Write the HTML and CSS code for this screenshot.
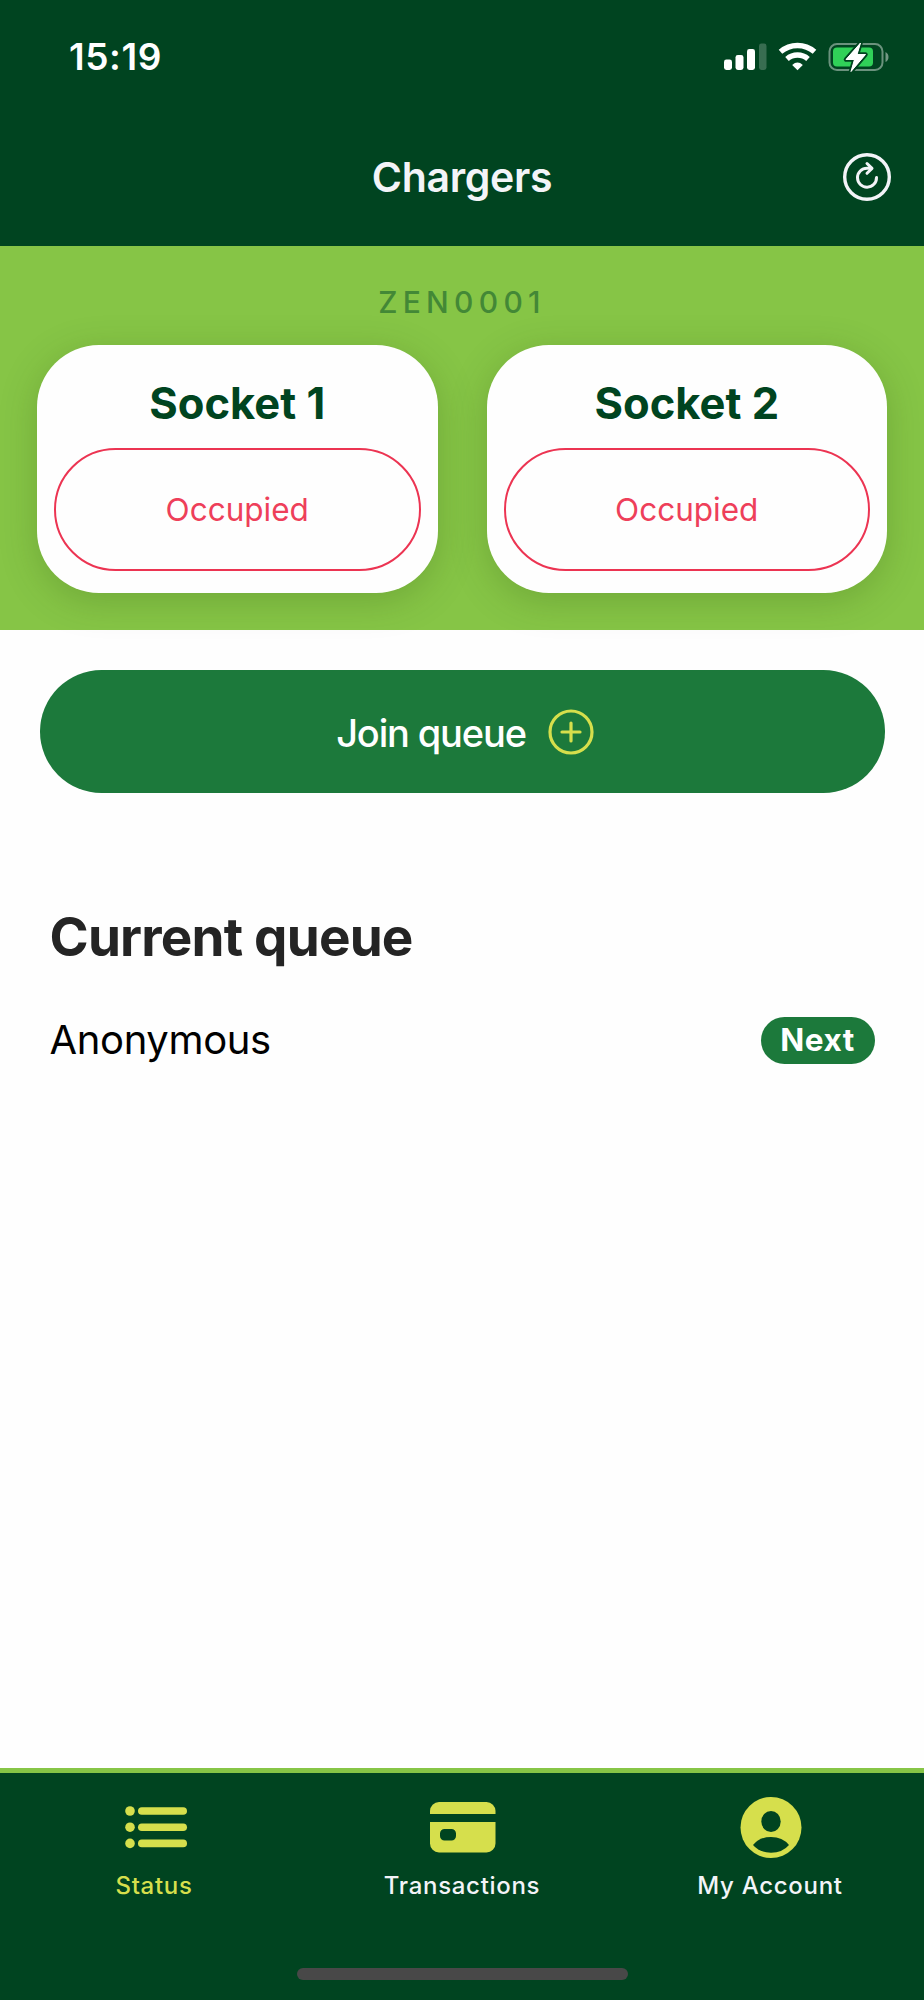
FILE: index.html
```html
<!DOCTYPE html>
<html lang="en">
<head>
    <meta charset="UTF-8">
    <meta name="viewport" content="width=device-width, initial-scale=1.0">
    <title>Chargers</title>
    <link rel="stylesheet" href="styles.css">
</head>
<body>

    <header class="header">
        <div class="status-bar">
            <span class="time">15:19</span>
            <svg class="status-icons" width="168" height="32" viewBox="0 0 168 32">
                <!-- signal -->
                <g fill="#fff">
                    <rect x="4" y="19.5" width="8" height="10.5" rx="2.4"/>
                    <rect x="15.5" y="15" width="8" height="15" rx="2.4"/>
                    <rect x="27" y="9" width="8" height="21" rx="2.4"/>
                    <rect x="39" y="3.5" width="7.5" height="26.5" rx="2.4" opacity="0.22"/>
                </g>
                <!-- wifi -->
                <g fill="none" stroke="#fff" stroke-width="5.4">
                    <path d="M60.5 11.8a26 26 0 0 1 34 0"/>
                    <path d="M67 19a16 16 0 0 1 21 0"/>
                </g>
                <path d="M77.5 30.3l-5.3-5.4q5.3-4.6 10.6 0z" fill="#fff"/>
                <!-- battery -->
                <rect x="109.5" y="4" width="53" height="26" rx="7.5" fill="none" stroke="#fff" stroke-opacity="0.42" stroke-width="2"/>
                <path d="M165.500 12q3 1.500 3 5t-3 5z" fill="#fff" opacity="0.45"/>
                <rect x="113" y="7.5" width="40" height="19" rx="4" fill="#30d158"/>
                <path d="M140.500 3l-14.500 16.500h8.500l-3.500 12 14.500-17h-8.500z" fill="#fff" stroke="#004420" stroke-width="4.5" stroke-linejoin="round" paint-order="stroke"/>
                <path d="M140.500 3l-14.500 16.500h8.500l-3.500 12 14.500-17h-8.500z" fill="#fff" stroke="#fff" stroke-width="1" stroke-linejoin="round"/>
            </svg>
        </div>
        <div class="title-bar">
            <h1 class="title">Chargers</h1>
            <svg class="refresh" width="50" height="50" viewBox="0 0 50 50" fill="none" stroke="#f3f4f8" stroke-linecap="round" stroke-linejoin="round">
                <circle cx="25" cy="25" r="22.3" stroke-width="3.4"/>
                <path d="M34.5 25.5a9.500 9.500 0 1 1-9.500-9.300h4" stroke-width="3"/>
                <path d="M25 11.500l5 4.900-5 4.900" stroke-width="3"/>
            </svg>
        </div>
    </header>

    <section class="charger">
        <p class="charger-id">ZEN0001</p>
        <div class="sockets">
            <div class="socket">
                <h2 class="socket-name">Socket 1</h2>
                <div class="socket-status">Occupied</div>
            </div>
            <div class="socket">
                <h2 class="socket-name">Socket 2</h2>
                <div class="socket-status">Occupied</div>
            </div>
        </div>
    </section>

    <main class="content">
        <button class="join">
            <span class="join-label">Join queue</span>
            <svg width="46" height="46" viewBox="0 0 46 46" fill="none" stroke="#d6df4c" stroke-width="3.2" stroke-linecap="round">
                <circle cx="23" cy="23" r="21"/>
                <path d="M23 14v18M14 23h18"/>
            </svg>
        </button>

        <h2 class="queue-title">Current queue</h2>
        <div class="queue-row">
            <span class="queue-name">Anonymous</span>
            <span class="badge">Next</span>
        </div>
    </main>

    <footer class="footer">
        <nav class="tabs">
            <a class="tab active">
                <svg width="68" height="64" viewBox="0 0 68 64" fill="#d6df4c">
                    <circle cx="10" cy="16" r="4.8"/>
                    <circle cx="10" cy="32.200" r="4.8"/>
                    <circle cx="10" cy="48.400" r="4.8"/>
                    <rect x="18" y="12.200" width="49" height="7.600" rx="3.8"/>
                    <rect x="18" y="28.400" width="49" height="7.600" rx="3.8"/>
                    <rect x="18" y="44.600" width="49" height="7.600" rx="3.8"/>
                </svg>
                <span>Status</span>
            </a>
            <a class="tab">
                <svg width="68" height="64" viewBox="0 0 68 64" fill="#d6df4c">
                    <path d="M2 19v-3a9 9 0 0 1 9-9h47.500a9 9 0 0 1 9 9v3z"/>
                    <path fill-rule="evenodd" d="M2 27h65.500v21.500a9 9 0 0 1-9 9h-47.500a9 9 0 0 1-9-9zM16.500 34a4.500 4.500 0 0 0-4.500 4.500v2.500a4.500 4.500 0 0 0 4.500 4.500h7a4.500 4.500 0 0 0 4.500-4.500v-2.500a4.500 4.500 0 0 0-4.500-4.500z"/>
                </svg>
                <span>Transactions</span>
            </a>
            <a class="tab">
                <svg width="68" height="64" viewBox="0 0 68 64">
                    <circle cx="35" cy="32.5" r="30.500" fill="#d6df4c"/>
                    <ellipse cx="35" cy="26.500" rx="9.700" ry="10.500" fill="#004420"/>
                    <path d="M17 50q6.500-8 18-8t18 8q-6.500 7.700-18 7.700t-18-7.700z" fill="#004420"/>
                </svg>
                <span>My Account</span>
            </a>
        </nav>
        <div class="home-indicator"></div>
    </footer>

</body>
</html>
```
FILE: styles.css
```css
* {
    box-sizing: border-box;
    margin: 0;
    padding: 0;
}

body {
    font-family: "Inter", "Liberation Sans", sans-serif;
    width: 924px;
    height: 2000px;
    display: flex;
    flex-direction: column;
    background: #fefefe;
    overflow: hidden;
}


.header {
    height: 246px;
    background: #004420;
    color: #fff;
}

.status-bar {
    height: 108px;
    display: flex;
    justify-content: space-between;
    align-items: center;
    padding: 4px 36px 0 69px;
}

.status-icons {
    overflow: visible;
}

.time {
    font-size: 37px;
    font-weight: 600;
    letter-spacing: 0.6px;
}

.title-bar {
    height: 138px;
    display: grid;
    grid-template-columns: 50px 1fr 50px;
    align-items: center;
    padding: 0 32px;
}

.title {
    grid-column: 2;
    text-align: center;
    font-size: 41px;
    font-weight: 600;
    letter-spacing: -0.3px;
    color: #f3f4f8;
}


.charger {
    height: 384px;
    background: #86c546;
    padding: 36px 37px 0;
}

.charger-id {
    text-align: center;
    font-size: 30px;
    line-height: 40px;
    font-weight: 500;
    letter-spacing: 5.3px;
    color: #438836;
}

.sockets {
    display: grid;
    grid-template-columns: 1fr 1fr;
    gap: 49px;
    margin-top: 23px;
}

.socket {
    height: 248px;
    padding: 32px 17px 0;
    border-radius: 62px;
    background: #fefefe;
    box-shadow: 0 8px 36px rgba(50, 90, 20, 0.26);
    text-align: center;
}

.socket-name {
    font-size: 43.5px;
    line-height: 52px;
    font-weight: 700;
    color: #004420;
}

.socket-status {
    height: 123px;
    margin-top: 19px;
    border: 2px solid #ec3452;
    border-radius: 62px;
    display: flex;
    align-items: center;
    justify-content: center;
    font-size: 31.5px;
    color: #ee3f5a;
}


.content {
    flex: 1;
    padding: 40px 39.5px 0;
}

.join {
    width: 100%;
    height: 123px;
    padding-left: 6px;
    border: none;
    border-radius: 62px;
    background: #1c793b;
    display: flex;
    align-items: center;
    justify-content: center;
    gap: 22px;
    font-family: inherit;
    font-size: 38px;
    font-weight: 500;
    letter-spacing: -1.15px;
    color: #fff;
}

.join-label {
    padding-top: 2px;
}

.queue-title {
    margin: 112px 0 0 10px;
    font-size: 53px;
    line-height: 64px;
    font-weight: 700;
    letter-spacing: -0.8px;
    color: #242424;
}

.queue-row {
    display: flex;
    align-items: center;
    justify-content: space-between;
    margin-top: 47px;
    padding: 0 10px;
}

.queue-name {
    font-size: 40px;
    line-height: 48px;
    letter-spacing: -0.35px;
    color: #000;
}

.badge {
    width: 114px;
    height: 47px;
    border-radius: 24px;
    background: #1c793b;
    color: #fff;
    font-size: 31.5px;
    line-height: 46px;
    font-weight: 700;
    letter-spacing: 0.5px;
    text-align: center;
}


.footer {
    height: 232px;
    border-top: 5px solid #86c546;
    background: #004420;
}

.tabs {
    height: 195px;
    display: grid;
    grid-template-columns: repeat(3, 1fr);
    padding-top: 22px;
}

.tab {
    display: flex;
    flex-direction: column;
    align-items: center;
    gap: 12px;
    font-size: 24px;
    font-weight: 500;
    line-height: 30px;
    letter-spacing: 0.7px;
    color: #f3f4f8;
}

.tab.active {
    color: #d6df4c;
}

.home-indicator {
    width: 331px;
    height: 12px;
    margin: 0 auto;
    border-radius: 6px;
    background: #484848;
}
```
